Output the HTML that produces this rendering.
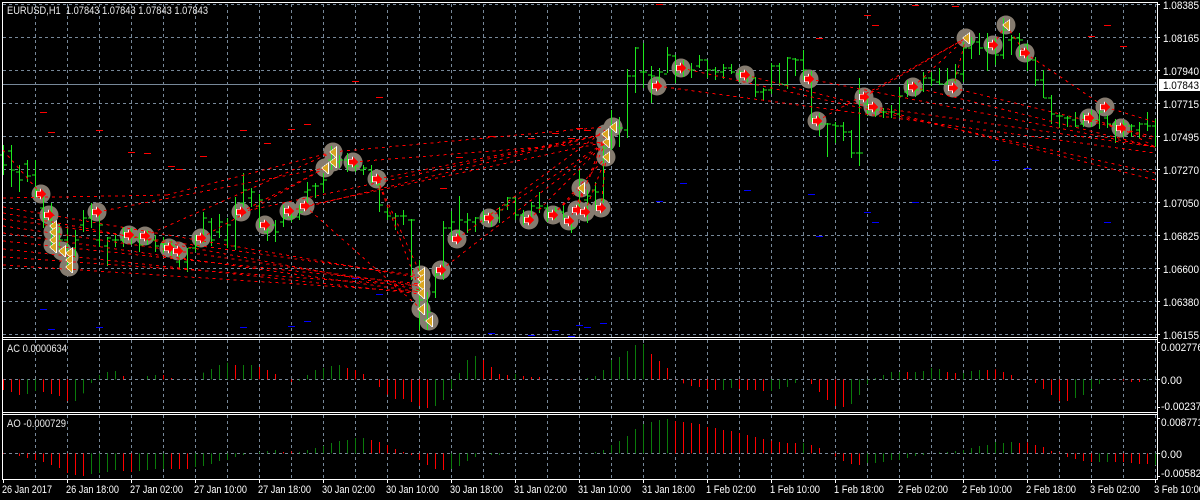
<!DOCTYPE html>
<html><head><meta charset="utf-8"><title>EURUSD,H1</title>
<style>
html,body{margin:0;padding:0;background:#000;width:1200px;height:500px;overflow:hidden}
svg{display:block}
text{font-family:"Liberation Sans",sans-serif;font-size:11px;fill:#e8e8e8;white-space:pre}
.r text{fill:#fff}
</style></head><body>
<svg width="1200" height="500" viewBox="0 0 1200 500" xmlns="http://www.w3.org/2000/svg">
<defs>
<circle id="c" r="9.5" fill="#857b6f"/>
<g id="a" shape-rendering="crispEdges"><path d="M-5-3H-1V-6L4 0L-1 6V3H-5Z" fill="#fff"/><path d="M-4-2.5H0V-5.5L5 0L0 5.5V2.5H-4Z" fill="#f00"/></g>
<g id="t" shape-rendering="crispEdges"><path d="M4-6V6H3L-4 0Z" fill="#fff"/><path d="M3-4.5V5L-3 0Z" fill="#daa520"/></g>
</defs>
<rect width="1200" height="500" fill="#000"/>
<g shape-rendering="crispEdges">
<!-- grid -->
<path stroke="#778899" stroke-dasharray="3 3" fill="none" d="M3 4.5H1157M3 37.5H1157M3 70.5H1157M3 103.5H1157M3 136.5H1157M3 169.5H1157M3 202.5H1157M3 235.5H1157M3 268.5H1157M3 301.5H1157M3 334.5H1157M3 379.5H1157M3 453.5H1157
M35.5 4V337M67.5 4V337M99.5 4V337M131.5 4V337M163.5 4V337M195.5 4V337M227.5 4V337M259.5 4V337M291.5 4V337M323.5 4V337M355.5 4V337M387.5 4V337M419.5 4V337M451.5 4V337M483.5 4V337M515.5 4V337M547.5 4V337M579.5 4V337M611.5 4V337M643.5 4V337M675.5 4V337M707.5 4V337M739.5 4V337M771.5 4V337M803.5 4V337M835.5 4V337M867.5 4V337M899.5 4V337M931.5 4V337M963.5 4V337M995.5 4V337M1027.5 4V337M1059.5 4V337M1091.5 4V337M1123.5 4V337M1155.5 4V337
M35.5 340V412M67.5 340V412M99.5 340V412M131.5 340V412M163.5 340V412M195.5 340V412M227.5 340V412M259.5 340V412M291.5 340V412M323.5 340V412M355.5 340V412M387.5 340V412M419.5 340V412M451.5 340V412M483.5 340V412M515.5 340V412M547.5 340V412M579.5 340V412M611.5 340V412M643.5 340V412M675.5 340V412M707.5 340V412M739.5 340V412M771.5 340V412M803.5 340V412M835.5 340V412M867.5 340V412M899.5 340V412M931.5 340V412M963.5 340V412M995.5 340V412M1027.5 340V412M1059.5 340V412M1091.5 340V412M1123.5 340V412M1155.5 340V412
M35.5 415V479M67.5 415V479M99.5 415V479M131.5 415V479M163.5 415V479M195.5 415V479M227.5 415V479M259.5 415V479M291.5 415V479M323.5 415V479M355.5 415V479M387.5 415V479M419.5 415V479M451.5 415V479M483.5 415V479M515.5 415V479M547.5 415V479M579.5 415V479M611.5 415V479M643.5 415V479M675.5 415V479M707.5 415V479M739.5 415V479M771.5 415V479M803.5 415V479M835.5 415V479M867.5 415V479M899.5 415V479M931.5 415V479M963.5 415V479M995.5 415V479M1027.5 415V479M1059.5 415V479M1091.5 415V479M1123.5 415V479M1155.5 415V479"/>
<!-- price line -->
<path stroke="#778899" d="M3 84.5H1157"/>
<!-- fractal dashes -->
<path stroke="#f00" d="M40 112.5h7M48 132.5h7M96 130.5h7M128 152.5h7M144 153.5h7M168 166.5h7M176 169.5h7M200 156.5h7M240 130.5h7M264 143.5h7M288 129.5h7M304 124.5h7M352 81.5h7M376 97.5h7M488 136.5h7M528 138.5h7M552 133.5h7M568 138.5h7M576 128.5h7M584 130.5h7M600 126.5h7M456 157.5h7M440 188.5h7M656 4.5h7M816 38.5h7M864 15.5h7M872 25.5h7M912 5.5h7M952 6.5h7M1104 25.5h7M1088 36.5h7M1120 46.5h7"/>
<path stroke="#00f" d="M40 309.5h7M48 329.5h7M96 327.5h7M240 327.5h7M288 326.5h7M304 321.5h7M352 278.5h7M376 294.5h7M488 333.5h7M528 335.5h7M552 330.5h7M568 336.5h7M576 325.5h7M584 327.5h7M600 323.5h7M656 201.5h7M680 183.5h7M744 190.5h7M808 194.5h7M992 160.5h7M1024 168.5h7M816 236.5h7M864 212.5h7M872 222.5h7M912 202.5h7M1104 222.5h7"/>
</g>
<!-- marker discs -->
<g>
<use href="#c" x="41" y="194"/><use href="#c" x="49" y="215"/><use href="#c" x="53" y="232"/><use href="#c" x="53" y="245"/><use href="#c" x="62" y="251"/><use href="#c" x="69" y="257"/><use href="#c" x="69" y="267"/><use href="#c" x="97" y="212"/><use href="#c" x="129" y="235"/><use href="#c" x="145" y="236"/><use href="#c" x="169" y="248"/><use href="#c" x="178" y="251"/><use href="#c" x="201" y="238"/><use href="#c" x="241" y="212"/><use href="#c" x="265" y="225"/><use href="#c" x="289" y="211"/><use href="#c" x="305" y="206"/><use href="#c" x="325" y="168"/><use href="#c" x="333" y="152"/><use href="#c" x="333" y="162"/><use href="#c" x="353" y="162"/><use href="#c" x="377" y="179"/><use href="#c" x="421" y="275"/><use href="#c" x="421" y="285"/><use href="#c" x="421" y="293"/><use href="#c" x="421" y="309"/><use href="#c" x="429" y="321"/><use href="#c" x="441" y="270"/><use href="#c" x="457" y="239"/><use href="#c" x="489" y="218"/><use href="#c" x="529" y="220"/><use href="#c" x="553" y="215"/><use href="#c" x="569" y="221"/><use href="#c" x="577" y="210"/><use href="#c" x="585" y="212"/><use href="#c" x="601" y="208"/><use href="#c" x="581" y="188"/><use href="#c" x="606" y="157"/><use href="#c" x="606" y="142"/><use href="#c" x="605" y="134"/><use href="#c" x="613" y="127"/><use href="#c" x="657" y="86"/><use href="#c" x="681" y="68"/><use href="#c" x="745" y="75"/><use href="#c" x="809" y="79"/><use href="#c" x="817" y="121"/><use href="#c" x="864" y="97"/><use href="#c" x="873" y="107"/><use href="#c" x="913" y="87"/><use href="#c" x="953" y="88"/><use href="#c" x="966" y="38"/><use href="#c" x="993" y="45"/><use href="#c" x="1006" y="25"/><use href="#c" x="1025" y="53"/><use href="#c" x="1089" y="118"/><use href="#c" x="1105" y="107"/><use href="#c" x="1121" y="128"/>
</g>
<!-- bars -->
<path shape-rendering="crispEdges" stroke="#1de81d" fill="none" d="M3.5 145V175M0 155h3M4 165h3M11.5 145V187M8 151h3M12 170h3M19.5 165V192M16 172h3M20 180h3M27.5 160V182M24 164h3M28 176h3M35.5 160V198M32 175h3M36 190h3M43.5 196V228M40 208h3M44 218h3M51.5 203V247M48 220h3M52 235h3M59.5 223V250M56 232h3M60 240h3M67.5 228V270M64 240h3M68 262h3M75.5 230V258M72 248h3M76 240h3M83.5 210V232M80 225h3M84 218h3M91.5 203V228M88 218h3M92 212h3M99.5 213V247M96 240h3M100 225h3M107.5 237V266M104 246h3M108 238h3M115.5 233V247M112 240h3M116 240h3M123.5 227V247M120 240h3M124 232h3M131.5 228V245M128 236h3M132 236h3M139.5 233V252M136 238h3M140 245h3M147.5 230V245M144 238h3M148 232h3M155.5 235V252M152 240h3M156 246h3M163.5 237V253M160 244h3M164 244h3M171.5 240V258M168 250h3M172 246h3M179.5 248V268M176 262h3M180 250h3M187.5 248V272M184 262h3M188 248h3M195.5 235V252M192 248h3M196 246h3M203.5 212V243M200 235h3M204 218h3M211.5 218V246M208 222h3M212 240h3M219.5 214V238M216 232h3M220 222h3M227.5 218V248M224 240h3M228 225h3M235.5 197V250M232 246h3M236 212h3M243.5 173V207M240 203h3M244 190h3M251.5 188V207M248 198h3M252 192h3M259.5 194V228M256 206h3M260 200h3M267.5 225V241M264 232h3M268 230h3M275.5 220V242M272 225h3M276 232h3M283.5 205V227M280 222h3M284 218h3M291.5 212V222M288 217h3M292 217h3M299.5 205V220M296 217h3M300 212h3M307.5 182V203M304 192h3M308 190h3M315.5 183V198M312 186h3M316 186h3M323.5 173V193M320 184h3M324 180h3M331.5 146V170M328 160h3M332 165h3M339.5 155V168M336 162h3M340 160h3M347.5 153V172M344 160h3M348 166h3M355.5 163V172M352 167h3M356 166h3M363.5 165V175M360 170h3M364 168h3M371.5 165V183M368 170h3M372 178h3M379.5 175V212M376 185h3M380 205h3M387.5 207V220M384 212h3M388 216h3M395.5 213V230M392 218h3M396 216h3M403.5 210V225M400 216h3M404 216h3M411.5 219V280M408 220h3M412 220h3M419.5 260V330M416 290h3M420 300h3M427.5 292V330M424 320h3M428 312h3M435.5 270V298M432 292h3M436 275h3M443.5 221V280M440 275h3M444 228h3M451.5 211V240M448 228h3M452 222h3M459.5 196V238M456 232h3M460 220h3M467.5 213V233M464 222h3M468 220h3M475.5 217V232M472 222h3M476 218h3M483.5 210V223M480 218h3M484 215h3M491.5 212V227M488 216h3M492 218h3M499.5 207V223M496 218h3M500 210h3M507.5 197V210M504 205h3M508 198h3M515.5 198V220M512 198h3M516 215h3M523.5 210V225M520 215h3M524 218h3M531.5 202V223M528 218h3M532 206h3M539.5 192V213M536 208h3M540 206h3M547.5 205V222M544 208h3M548 212h3M555.5 207V220M552 212h3M556 210h3M563.5 203V220M560 212h3M564 216h3M571.5 218V233M568 222h3M572 228h3M579.5 170V210M576 205h3M580 180h3M587.5 190V223M584 200h3M588 196h3M595.5 182V210M592 190h3M596 192h3M603.5 143V203M600 200h3M604 148h3M611.5 110V150M608 140h3M612 128h3M619.5 117V147M616 128h3M620 128h3M627.5 69V138M624 130h3M628 76h3M635.5 47V93M632 76h3M636 48h3M643.5 43V88M640 72h3M644 72h3M651.5 66V103M648 75h3M652 76h3M659.5 68V85M656 78h3M660 72h3M667.5 47V73M664 74h3M668 55h3M675.5 55V83M672 56h3M676 74h3M683.5 60V77M680 68h3M684 68h3M691.5 63V78M688 70h3M692 70h3M699.5 55V68M696 66h3M700 60h3M707.5 60V78M704 60h3M708 70h3M715.5 67V80M712 70h3M716 72h3M723.5 64V79M720 72h3M724 68h3M731.5 64V74M728 68h3M732 72h3M739.5 70V82M736 74h3M740 72h3M747.5 72V82M744 74h3M748 76h3M755.5 77V97M752 78h3M756 92h3M763.5 88V100M760 92h3M764 90h3M771.5 63V94M768 90h3M772 66h3M779.5 63V86M776 66h3M780 84h3M787.5 57V89M784 85h3M788 58h3M795.5 58V76M792 59h3M796 60h3M803.5 50V80M800 60h3M804 70h3M811.5 71V122M808 80h3M812 118h3M819.5 113V136M816 118h3M820 124h3M827.5 123V157M824 124h3M828 124h3M835.5 122V143M832 125h3M836 126h3M843.5 122V141M840 126h3M844 132h3M851.5 130V158M848 132h3M852 153h3M859.5 78V166M856 153h3M860 153h3M867.5 97V116M864 104h3M868 112h3M875.5 107V117M872 110h3M876 110h3M883.5 108V118M880 112h3M884 112h3M891.5 105V118M888 112h3M892 112h3M899.5 87V118M896 114h3M900 96h3M907.5 80V97M904 92h3M908 88h3M915.5 83V97M912 88h3M916 90h3M923.5 72V92M920 90h3M924 78h3M931.5 72V86M928 78h3M932 80h3M939.5 68V85M936 82h3M940 84h3M947.5 68V85M944 84h3M948 80h3M955.5 64V83M952 80h3M956 73h3M963.5 42V82M960 74h3M964 48h3M971.5 37V59M968 48h3M972 42h3M979.5 33V55M976 42h3M980 48h3M987.5 33V71M984 48h3M988 44h3M995.5 38V65M992 44h3M996 55h3M1003.5 18V59M1000 55h3M1004 30h3M1011.5 35V55M1008 40h3M1012 38h3M1019.5 33V57M1016 38h3M1020 40h3M1027.5 43V71M1024 45h3M1028 60h3M1035.5 57V86M1032 60h3M1036 80h3M1043.5 70V98M1040 80h3M1044 98h3M1051.5 95V124M1048 98h3M1052 114h3M1059.5 114V128M1056 116h3M1060 116h3M1067.5 116V127M1064 118h3M1068 118h3M1075.5 112V127M1072 120h3M1076 126h3M1083.5 113V127M1080 124h3M1084 118h3M1091.5 110V127M1088 118h3M1092 120h3M1099.5 110V129M1096 120h3M1100 112h3M1107.5 115V128M1104 118h3M1108 124h3M1115.5 119V143M1112 124h3M1116 126h3M1123.5 120V137M1120 128h3M1124 124h3M1131.5 124V137M1128 126h3M1132 126h3M1139.5 122V139M1136 130h3M1140 124h3M1147.5 112V131M1144 124h3M1148 126h3M1155.5 119V147M1152 126h3"/>
<!-- trade lines -->
<path shape-rendering="crispEdges" stroke="#f00" stroke-dasharray="3 4" fill="none" d="M3 150L41 194M3 198L167 195M167 195L333 152M3 207L421 278M3 213L421 290M3 219L421 276M3 226L421 286M3 233L421 292M3 241L421 284M3 249L421 294M3 257L421 286M3 265L421 292
M97 212L325 168M145 236L333 152M201 238L325 168M241 212L325 168
M305 206L421 309M377 179L421 275M377 179L421 293
M305 206L606 142M289 211L605 134M241 212L605 134M353 162L606 142M377 179L605 134M333 152L605 127M457 239L605 130M441 270L605 143M489 218L606 142M529 220L606 142M553 215L606 157M569 221L606 142M577 210L605 134M585 212L606 157M601 208L606 157M553 215L581 188
M657 86L1155 153M681 68L1155 173M745 75L1155 180M809 79L1155 147M873 107L1155 147M913 87L1155 147M953 88L1155 137M817 121L966 38M864 97L966 38M913 87L966 38M953 88L966 38M993 45L1006 25M1006 25L1025 53M1025 53L1105 107M1105 107L1155 122M1089 118L1155 140M1121 128L1155 147"/>
<!-- marker glyphs -->
<g>
<use href="#a" x="41" y="194"/><use href="#a" x="49" y="215"/><use href="#t" x="53" y="226"/><use href="#t" x="53" y="232"/><use href="#t" x="53" y="240"/><use href="#t" x="53" y="247"/><use href="#t" x="62" y="251"/><use href="#t" x="69" y="253"/><use href="#t" x="69" y="260"/><use href="#t" x="69" y="267"/><use href="#a" x="97" y="212"/><use href="#a" x="129" y="235"/><use href="#a" x="145" y="236"/><use href="#a" x="169" y="248"/><use href="#a" x="178" y="251"/><use href="#a" x="201" y="238"/><use href="#a" x="241" y="212"/><use href="#a" x="265" y="225"/><use href="#a" x="289" y="211"/><use href="#a" x="305" y="206"/><use href="#t" x="325" y="168"/><use href="#t" x="333" y="152"/><use href="#t" x="333" y="162"/><use href="#a" x="353" y="162"/><use href="#a" x="377" y="179"/><use href="#t" x="421" y="273"/><use href="#t" x="421" y="279"/><use href="#t" x="421" y="285"/><use href="#t" x="421" y="293"/><use href="#t" x="421" y="309"/><use href="#t" x="429" y="321"/><use href="#a" x="441" y="270"/><use href="#a" x="457" y="239"/><use href="#a" x="489" y="218"/><use href="#a" x="529" y="220"/><use href="#a" x="553" y="215"/><use href="#a" x="569" y="221"/><use href="#a" x="577" y="210"/><use href="#a" x="585" y="212"/><use href="#a" x="601" y="208"/><use href="#t" x="581" y="188"/><use href="#t" x="606" y="157"/><use href="#t" x="606" y="142"/><use href="#t" x="605" y="134"/><use href="#t" x="613" y="127"/><use href="#a" x="657" y="86"/><use href="#a" x="681" y="68"/><use href="#a" x="745" y="75"/><use href="#a" x="809" y="79"/><use href="#a" x="817" y="121"/><use href="#a" x="864" y="97"/><use href="#a" x="873" y="107"/><use href="#a" x="913" y="87"/><use href="#a" x="953" y="88"/><use href="#t" x="966" y="38"/><use href="#a" x="993" y="45"/><use href="#t" x="1006" y="25"/><use href="#a" x="1025" y="53"/><use href="#a" x="1089" y="118"/><use href="#a" x="1105" y="107"/><use href="#a" x="1121" y="128"/>
</g>
<!-- AC / AO histograms (coordinates in 1/3 px vertical, offset 330) -->
<g transform="translate(0,330) scale(1,.33333)" shape-rendering="crispEdges" fill="none" stroke-width="1">
<path stroke="#f00" d="M3.5 148V180M11.5 148V186M19.5 148V195M43.5 148V186M51.5 148V192M59.5 148V198M67.5 148V213M123.5 148V138M163.5 148V135M171.5 148V144M187.5 148V147M235.5 148V105M259.5 148V111M267.5 148V120M275.5 148V132M291.5 148V156M347.5 148V114M355.5 148V120M363.5 148V132M379.5 148V171M387.5 148V194M395.5 148V207M403.5 148V207M411.5 148V216M419.5 148V228M427.5 148V234M483.5 148V90M491.5 148V111M499.5 148V132M507.5 148V135M523.5 148V138M531.5 148V141M539.5 148V141M555.5 148V147M571.5 148V147M651.5 148V72M659.5 148V93M667.5 148V114M675.5 148V147M683.5 148V160M691.5 148V168M699.5 148V171M707.5 148V177M715.5 148V180M739.5 148V177M747.5 148V180M755.5 148V180M763.5 148V183M811.5 148V162M819.5 148V186M827.5 148V210M835.5 148V228M843.5 148V231M907.5 148V126M947.5 148V126M955.5 148V129M987.5 148V120M995.5 148V118M1003.5 148V126M1011.5 148V135M1019.5 148V147M1035.5 148V159M1043.5 148V177M1051.5 148V195M1059.5 148V213M1067.5 148V213M1115.5 148V150M1123.5 148V152M1131.5 148V156M1139.5 148V156"/>
<path stroke="#0a7a0a" d="M27.5 148V192M35.5 148V183M75.5 148V213M83.5 148V190M91.5 148V159M99.5 148V135M107.5 148V126M115.5 148V123M147.5 148V138M155.5 148V135M203.5 148V128M211.5 148V117M219.5 148V105M227.5 148V98M243.5 148V105M251.5 148V105M299.5 148V152M307.5 148V135M315.5 148V120M323.5 148V114M331.5 148V108M339.5 148V105M435.5 148V228M443.5 148V210M451.5 148V177M459.5 148V129M467.5 148V90M475.5 148V78M515.5 148V132M563.5 148V147M587.5 148V144M595.5 148V138M603.5 148V120M611.5 148V90M619.5 148V81M627.5 148V63M635.5 148V45M643.5 148V42M723.5 148V180M731.5 148V174M771.5 148V183M779.5 148V177M787.5 148V171M795.5 148V159M851.5 148V222M859.5 148V195M867.5 148V162M875.5 148V144M883.5 148V135M891.5 148V126M899.5 148V126M915.5 148V126M923.5 148V123M931.5 148V114M939.5 148V117M963.5 148V129M971.5 148V123M979.5 148V120M1075.5 148V204M1083.5 148V195M1091.5 148V177M1099.5 148V162M1147.5 148V152"/>
<path stroke="#f00" d="M3.5 370V372M19.5 370V378M27.5 370V384M35.5 370V390M43.5 370V396M51.5 370V405M59.5 370V414M67.5 370V429M75.5 370V435M83.5 370V438M123.5 370V423M131.5 370V426M171.5 370V417M179.5 370V417M187.5 370V417M283.5 370V366M291.5 370V364M371.5 370V330M379.5 370V336M387.5 370V345M395.5 370V357M403.5 370V366M411.5 370V375M419.5 370V390M427.5 370V405M435.5 370V417M443.5 370V420M675.5 370V273M683.5 370V276M691.5 370V279M699.5 370V282M707.5 370V291M715.5 370V294M723.5 370V300M731.5 370V303M739.5 370V309M747.5 370V315M755.5 370V321M763.5 370V327M771.5 370V332M779.5 370V336M787.5 370V339M795.5 370V339M811.5 370V345M819.5 370V354M835.5 370V379M843.5 370V393M851.5 370V402M859.5 370V405M1019.5 370V339M1027.5 370V337M1035.5 370V345M1043.5 370V351M1051.5 370V363M1059.5 370V367M1067.5 370V381M1075.5 370V387M1083.5 370V393M1091.5 370V396M1115.5 370V396M1123.5 370V396M1131.5 370V399M1139.5 370V402M1147.5 370V402"/>
<path stroke="#0a7a0a" d="M91.5 370V432M99.5 370V429M107.5 370V426M115.5 370V420M139.5 370V423M147.5 370V420M155.5 370V417M163.5 370V417M195.5 370V411M203.5 370V408M211.5 370V402M219.5 370V393M227.5 370V390M235.5 370V381M243.5 370V375M259.5 370V366M267.5 370V363M275.5 370V360M299.5 370V366M307.5 370V360M315.5 370V354M323.5 370V348M331.5 370V339M339.5 370V333M347.5 370V330M355.5 370V324M363.5 370V324M451.5 370V417M459.5 370V408M467.5 370V393M475.5 370V381M491.5 370V375M499.5 370V375M587.5 370V369M595.5 370V366M603.5 370V360M611.5 370V345M619.5 370V333M627.5 370V318M635.5 370V297M643.5 370V282M651.5 370V276M659.5 370V270M667.5 370V267M803.5 370V339M867.5 370V399M875.5 370V399M883.5 370V396M891.5 370V390M899.5 370V390M907.5 370V384M915.5 370V378M923.5 370V375M939.5 370V367M947.5 370V366M955.5 370V363M963.5 370V360M971.5 370V354M979.5 370V348M987.5 370V345M995.5 370V336M1003.5 370V339M1011.5 370V336M1099.5 370V396M1107.5 370V396M1155.5 370V405"/>
</g>
<!-- frames -->
<g shape-rendering="crispEdges">
<path stroke="#fff" fill="none" d="M2.5 2.5H1157.5V479.5H2.5ZM2 337.5H1157M2 339.5H1157M2 412.5H1157M2 414.5H1157"/>
<path stroke="#fff" d="M1157 4.5h3M1157 37.5h3M1157 70.5h3M1157 103.5h3M1157 136.5h3M1157 169.5h3M1157 202.5h3M1157 235.5h3M1157 268.5h3M1157 301.5h3M1157 334.5h3M1157 342.5h3M1157 379.5h3M1157 407.5h3M1157 418.5h3M1157 453.5h3M1157 476.5h3
M3.5 480v3M67.5 480v3M131.5 480v3M195.5 480v3M259.5 480v3M323.5 480v3M387.5 480v3M451.5 480v3M515.5 480v3M579.5 480v3M643.5 480v3M707.5 480v3M771.5 480v3M835.5 480v3M899.5 480v3M963.5 480v3M1027.5 480v3M1091.5 480v3M1155.5 480v3"/>
<rect x="1159" y="79" width="41" height="12" fill="#fff"/>
</g>
<g style="letter-spacing:0">
<text x="7" y="14" textLength="201" lengthAdjust="spacingAndGlyphs">EURUSD,H1  1.07843 1.07843 1.07843 1.07843</text>
<text x="7" y="352" textLength="60" lengthAdjust="spacingAndGlyphs">AC 0.0000634</text>
<text x="7" y="427" textLength="59" lengthAdjust="spacingAndGlyphs">AO -0.000729</text>
</g>
<g class="r">
<text x="1163" y="9" textLength="36" lengthAdjust="spacingAndGlyphs">1.08385</text>
<text x="1163" y="42" textLength="36" lengthAdjust="spacingAndGlyphs">1.08165</text>
<text x="1163" y="75" textLength="36" lengthAdjust="spacingAndGlyphs">1.07940</text>
<text x="1163" y="108" textLength="36" lengthAdjust="spacingAndGlyphs">1.07715</text>
<text x="1163" y="141" textLength="36" lengthAdjust="spacingAndGlyphs">1.07495</text>
<text x="1163" y="174" textLength="36" lengthAdjust="spacingAndGlyphs">1.07270</text>
<text x="1163" y="207" textLength="36" lengthAdjust="spacingAndGlyphs">1.07050</text>
<text x="1163" y="240" textLength="36" lengthAdjust="spacingAndGlyphs">1.06825</text>
<text x="1163" y="273" textLength="36" lengthAdjust="spacingAndGlyphs">1.06600</text>
<text x="1163" y="306" textLength="36" lengthAdjust="spacingAndGlyphs">1.06380</text>
<text x="1163" y="339" textLength="36" lengthAdjust="spacingAndGlyphs">1.06155</text>
<text x="1163" y="89" textLength="36" lengthAdjust="spacingAndGlyphs" style="fill:#000">1.07843</text>
<text x="1161" y="351" textLength="42" lengthAdjust="spacingAndGlyphs">0.002776</text>
<text x="1161" y="384" textLength="21" lengthAdjust="spacingAndGlyphs">0.00</text>
<text x="1161" y="410" textLength="46" lengthAdjust="spacingAndGlyphs">-0.002375</text>
<text x="1161" y="426" textLength="42" lengthAdjust="spacingAndGlyphs">0.008771</text>
<text x="1161" y="458" textLength="21" lengthAdjust="spacingAndGlyphs">0.00</text>
<text x="1161" y="477" textLength="46" lengthAdjust="spacingAndGlyphs">-0.005825</text>
<text x="2" y="493" textLength="50" lengthAdjust="spacingAndGlyphs">26 Jan 2017</text>
<text x="66" y="493" textLength="53" lengthAdjust="spacingAndGlyphs">26 Jan 18:00</text>
<text x="130" y="493" textLength="53" lengthAdjust="spacingAndGlyphs">27 Jan 02:00</text>
<text x="194" y="493" textLength="53" lengthAdjust="spacingAndGlyphs">27 Jan 10:00</text>
<text x="258" y="493" textLength="53" lengthAdjust="spacingAndGlyphs">27 Jan 18:00</text>
<text x="322" y="493" textLength="53" lengthAdjust="spacingAndGlyphs">30 Jan 02:00</text>
<text x="386" y="493" textLength="53" lengthAdjust="spacingAndGlyphs">30 Jan 10:00</text>
<text x="450" y="493" textLength="53" lengthAdjust="spacingAndGlyphs">30 Jan 18:00</text>
<text x="514" y="493" textLength="53" lengthAdjust="spacingAndGlyphs">31 Jan 02:00</text>
<text x="578" y="493" textLength="53" lengthAdjust="spacingAndGlyphs">31 Jan 10:00</text>
<text x="642" y="493" textLength="53" lengthAdjust="spacingAndGlyphs">31 Jan 18:00</text>
<text x="706" y="493" textLength="50" lengthAdjust="spacingAndGlyphs">1 Feb 02:00</text>
<text x="770" y="493" textLength="50" lengthAdjust="spacingAndGlyphs">1 Feb 10:00</text>
<text x="834" y="493" textLength="50" lengthAdjust="spacingAndGlyphs">1 Feb 18:00</text>
<text x="898" y="493" textLength="50" lengthAdjust="spacingAndGlyphs">2 Feb 02:00</text>
<text x="962" y="493" textLength="50" lengthAdjust="spacingAndGlyphs">2 Feb 10:00</text>
<text x="1026" y="493" textLength="50" lengthAdjust="spacingAndGlyphs">2 Feb 18:00</text>
<text x="1090" y="493" textLength="50" lengthAdjust="spacingAndGlyphs">3 Feb 02:00</text>
<text x="1154" y="493" textLength="50" lengthAdjust="spacingAndGlyphs">3 Feb 10:00</text>
</g>
</svg>
</body></html>
